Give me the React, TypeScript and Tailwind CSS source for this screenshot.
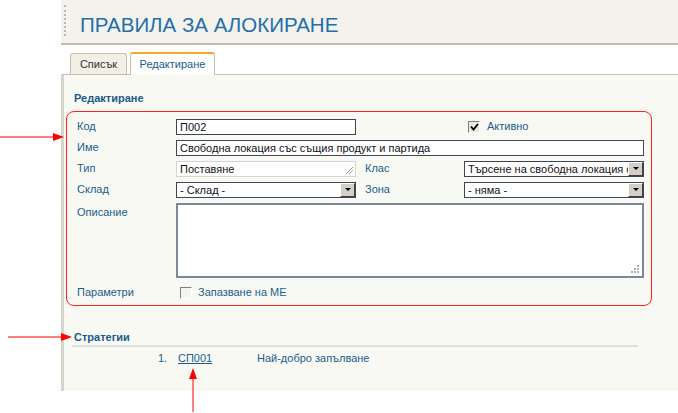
import React from 'react';

// стрелка-анотация (червена)
function ArrowRight({ className }: { className: string }) {
  return (
    <svg className={className} viewBox="0 0 64 10" preserveAspectRatio="none">
      <line x1="0" y1="5" x2="54" y2="5" stroke="#ff0000" strokeWidth="1" />
      <polygon points="53,1 64,5 53,9" fill="#ff0000" />
    </svg>
  );
}

function ArrowUp({ className }: { className: string }) {
  return (
    <svg className={className} viewBox="0 0 10 44">
      <line x1="5" y1="10" x2="5" y2="44" stroke="#ff0000" strokeWidth="1" />
      <polygon points="1,11 5,0 9,11" fill="#ff0000" />
    </svg>
  );
}

function SelectBox({ value, width }: { value: string; width: string }) {
  return (
    <div className={`flex h-[16px] ${width} items-center border border-[#3d4652] bg-white`}>
      <span className="flex-1 overflow-hidden whitespace-nowrap pl-[3px] leading-[14px] text-[#111]">{value}</span>
      <span className="flex h-[14px] w-[15px] items-center justify-center border border-t-white border-l-white border-r-[#404040] border-b-[#404040] bg-[#d4d0c8]">
        <span className="h-0 w-0 border-x-[3px] border-t-[3px] border-x-transparent border-t-black" />
      </span>
    </div>
  );
}

function Grip() {
  return (
    <div className="absolute right-[3px] bottom-[3px] grid grid-cols-3 gap-[1px]">
      <span className="h-[2px] w-[2px]" />
      <span className="h-[2px] w-[2px]" />
      <span className="h-[2px] w-[2px] bg-[#b0b0b0]" />
      <span className="h-[2px] w-[2px]" />
      <span className="h-[2px] w-[2px] bg-[#b0b0b0]" />
      <span className="h-[2px] w-[2px] bg-[#b0b0b0]" />
      <span className="h-[2px] w-[2px] bg-[#b0b0b0]" />
      <span className="h-[2px] w-[2px] bg-[#b0b0b0]" />
      <span className="h-[2px] w-[2px] bg-[#b0b0b0]" />
    </div>
  );
}

export default function App() {
  return (
    <div className="relative h-[413px] w-[678px] overflow-hidden bg-white text-[11px] font-['Liberation_Sans',Arial,sans-serif] text-[#1a5d8c]">
      <div className="ml-[61px]">
        {/* заглавие */}
        <div className="flex h-[45px] items-start border-b-2 border-[#c8c0a2] bg-[#f3f2ec]">
          <div className="mt-[5px] ml-[3px] h-[31px] border-l-2 border-dotted border-[#b9b9b0]" />
          <h1 className="mt-[12px] ml-[14px] text-[20.5px] leading-[26px] text-[#236eab]">
            ПРАВИЛА ЗА АЛОКИРАНЕ
          </h1>
        </div>

        {/* табове */}
        <div className="flex h-[29px] items-end gap-[3px] pl-[9px]">
          <div className="flex h-[21px] w-[57px] items-center justify-center rounded-t-[3px] border border-b-0 border-[#c8c0a2] bg-[#f1efe6] text-[#333]">
            Списък
          </div>
          <div className="relative -mb-[1px] flex h-[23px] w-[85px] items-center justify-center rounded-t-[3px] border border-b-0 border-[#c8c0a2] border-t-2 border-t-[#f5a623] bg-white text-[#1a5d8c]">
            Редактиране
          </div>
        </div>

        {/* панел */}
        <div className="h-[317px] border-t border-l-[3px] border-t-[#c8c0a2] border-l-[#d6d5cc] bg-[#f9f9f4]">
          <div className="pt-[15px] pl-[10px] text-[11px] font-bold text-[#1a5a88]">Редактиране</div>

          <div className="mt-[4px] ml-[2px] h-[195px] w-[586px] rounded-[8px] border border-[#f22] pt-[7px] pl-[10px]">
            <div className="flex h-[16px] items-center">
              <span className="w-[99px]">Код</span>
              <div className="h-[16px] w-[180px] border border-[#3d4652] bg-white pl-[3px] leading-[14px] text-[#111]">П002</div>
              <div className="ml-[112px] flex items-center">
                <span className="flex h-[12px] w-[12px] items-center justify-center border border-t-[#808080] border-l-[#808080] border-r-white border-b-white bg-[#e8e8e0]">
                  <svg width="9" height="8" viewBox="0 0 9 8">
                    <path d="M1 3.5 L3.5 6.5 L8 1" fill="none" stroke="#000" strokeWidth="1.8" />
                  </svg>
                </span>
                <span className="ml-[7px]">Активно</span>
              </div>
            </div>

            <div className="mt-[5px] flex h-[16px] items-center">
              <span className="w-[99px]">Име</span>
              <div className="h-[16px] w-[468px] border border-[#3d4652] bg-white pl-[3px] leading-[14px] text-[#111]">
                Свободна локация със същия продукт и партида
              </div>
            </div>

            <div className="mt-[5px] flex h-[16px] items-center">
              <span className="w-[99px]">Тип</span>
              <div className="relative h-[16px] w-[180px] border border-[#d5d3cc] bg-white pl-[3px] leading-[14px] text-[#111]">
                Поставяне
                <svg className="absolute right-[2px] bottom-[2px]" width="7" height="7" viewBox="0 0 7 7">
                  <path d="M0 7 L7 0 M3 7 L7 3" stroke="#999" strokeWidth="1" />
                </svg>
              </div>
              <span className="ml-[9px] w-[99px]">Клас</span>
              <SelectBox value="Търсене на свободна локация с" width="w-[180px]" />
            </div>

            <div className="mt-[5px] flex h-[16px] items-center">
              <span className="w-[99px]">Склад</span>
              <SelectBox value="- Склад -" width="w-[180px]" />
              <span className="ml-[9px] w-[99px]">Зона</span>
              <SelectBox value="- няма -" width="w-[180px]" />
            </div>

            <div className="mt-[5px] flex items-start">
              <span className="w-[99px] pt-[1px]">Описание</span>
              <div className="relative h-[75px] w-[468px] border-2 border-[#7c8896] bg-white">
                <Grip />
              </div>
            </div>

            <div className="mt-[9px] flex h-[12px] items-center">
              <span className="w-[103px]">Параметри</span>
              <span className="h-[12px] w-[12px] border border-t-[#808080] border-l-[#808080] border-r-white border-b-white bg-[#f4f4f0]" />
              <span className="ml-[6px]">Запазване на МЕ</span>
            </div>
          </div>

          <div className="mt-[23px] pl-[10px] font-bold text-[#1a5a88]">Стратегии</div>
          <div className="ml-[8px] h-[2px] w-[566px] bg-[#dedede]" />
          <div className="mt-[3px] flex items-center pl-[94px]">
            <span className="w-[20px]">1.</span>
            <span className="w-[79px] underline">СП001</span>
            <span>Най-добро запълване</span>
          </div>
        </div>
      </div>

      {/* анотации */}
      <ArrowRight className="absolute top-[132px] left-0 h-[10px] w-[64px]" />
      <ArrowRight className="absolute top-[332px] left-[8px] h-[10px] w-[64px]" />
      <ArrowUp className="absolute top-[368px] left-[188px] h-[44px] w-[10px]" />
    </div>
  );
}
